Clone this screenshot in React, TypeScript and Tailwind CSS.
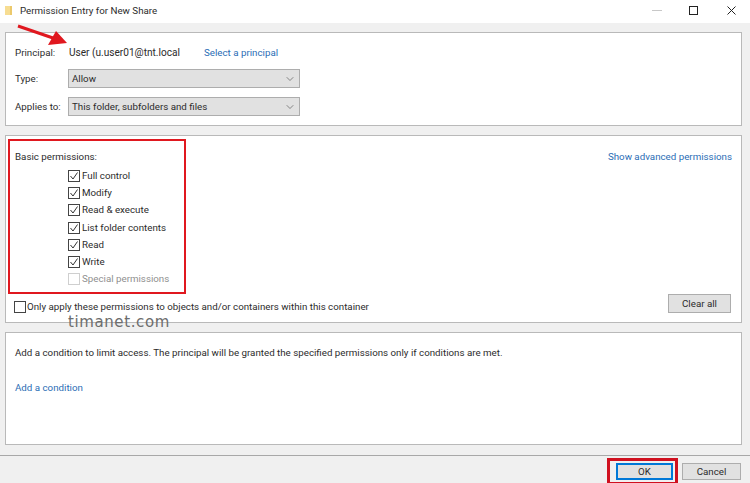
import { ChevronDown } from 'lucide-react'

const permissions = ['Full control', 'Modify', 'Read & execute', 'List folder contents', 'Read', 'Write']

function Check({ checked = false, disabled = false }: { checked?: boolean; disabled?: boolean }) {
  return (
    <span
      className={`flex h-[12px] w-[12px] shrink-0 items-center justify-center border bg-white ${
        disabled ? 'border-[#cfcfcf]' : 'border-[#444444]'
      }`}
    >
      {checked && (
        <svg width="10" height="10" viewBox="0 0 10 10" fill="none" stroke="#333333" strokeWidth="1">
          <path d="M1.5 5 L4 8 L8.5 1.5" />
        </svg>
      )}
    </span>
  )
}

function Select({ value }: { value: string }) {
  return (
    <div className="flex h-[19px] w-[232px] items-center justify-between border border-[#adadad] bg-[#e1e1e1] px-[3px]">
      <span className="pt-px">{value}</span>
      <ChevronDown size={12} strokeWidth={1.2} className="text-[#444444]" />
    </div>
  )
}

export default function App() {
  return (
    <div
      className="relative flex h-[483px] w-[750px] flex-col overflow-hidden bg-[#f0f0f0] text-[9.75px] leading-[14px] text-[#2b2b2b]"
      style={{ fontFamily: 'Roboto, sans-serif' }}
    >
      {/* Title bar */}
      <div className="flex h-[23px] shrink-0 items-center bg-white pb-[2px] pl-[5px]">
        <svg width="7" height="9" viewBox="0 0 7 9" className="mr-[8px]">
          <path d="M0 0 H7 V9 H0 Z" fill="#f7dd92" />
          <path d="M5 0 H7 V9 H5 Z" fill="#ecc96c" />
        </svg>
        <span>Permission Entry for New Share</span>
        <div className="ml-auto flex items-center">
          <div className="mr-[27px] h-px w-[10px] bg-[#c8c8c8]" />
          <div className="mr-[29px] h-[9px] w-[9px] border border-[#222222]" />
          <svg width="9" height="9" viewBox="0 0 9 9" stroke="#222222" strokeWidth="1" className="mr-[14px]">
            <path d="M0.5 0.5 L8.5 8.5 M8.5 0.5 L0.5 8.5" />
          </svg>
        </div>
      </div>

      <div className="flex flex-col gap-[9px] pl-[5px] pr-[8px] pt-[9px]">
        {/* Principal */}
        <div className="flex h-[94px] shrink-0 flex-col border border-[#b9b9b9] bg-white pl-[9px] pt-[11px]">
          <div className="flex h-[16px] items-center pt-px">
            <span className="w-[54px]">Principal:</span>
            <span className="w-[135px] text-[10.1px]">User (u.user01@tnt.local</span>
            <span className="text-[#2a6db5]">Select a principal</span>
          </div>
          <div className="mt-[9px] flex items-center">
            <span className="w-[53px] pt-px">Type:</span>
            <Select value="Allow" />
          </div>
          <div className="mt-[9px] flex items-center">
            <span className="w-[53px] pt-px">Applies to:</span>
            <Select value="This folder, subfolders and files" />
          </div>
        </div>

        {/* Basic permissions */}
        <div className="flex h-[188px] shrink-0 flex-col border border-[#b9b9b9] bg-white pl-[9px] pr-[9px] pt-[14px]">
          <div className="flex h-[14px] items-center justify-between">
            <span>Basic permissions:</span>
            <span className="text-[#2a6db5]">Show advanced permissions</span>
          </div>
          <div className="mt-[3px] flex flex-col pl-[53px]">
            {permissions.map((p) => (
              <div key={p} className="flex h-[17.3px] items-center gap-[2px]">
                <Check checked />
                <span>{p}</span>
              </div>
            ))}
            <div className="flex h-[17.3px] items-center gap-[2px] text-[#8f8f8f]">
              <Check disabled />
              <span>Special permissions</span>
            </div>
          </div>
          <div className="mt-[6px] flex items-start justify-between">
            <div className="-ml-[1px] mt-[6px] flex items-center gap-[1px]">
              <Check />
              <span>Only apply these permissions to objects and/or containers within this container</span>
            </div>
            <div className="mr-px flex h-[19px] w-[63px] items-center justify-center border border-[#adadad] bg-[#e1e1e1]">
              Clear all
            </div>
          </div>
        </div>

        {/* Condition */}
        <div className="flex h-[113px] shrink-0 flex-col border border-[#b9b9b9] bg-white pl-[9px] pt-[13px]">
          <span>
            Add a condition to limit access. The principal will be granted the specified permissions only if conditions are met.
          </span>
          <span className="mt-[21px] text-[#2a6db5]">Add a condition</span>
        </div>
      </div>

      {/* Footer */}
      <div className="mt-[10px] flex h-[28px] shrink-0 items-start justify-end gap-[9px] border-t border-[#a8a8a8] pr-[9px] pt-[7px]">
        <div className="flex h-[17px] w-[57px] items-center justify-center border-2 border-[#0078d7] bg-[#e1e1e1]">OK</div>
        <div className="flex h-[17px] w-[59px] items-center justify-center border border-[#adadad] bg-[#e1e1e1]">Cancel</div>
      </div>

      {/* Annotations */}
      <svg className="absolute left-[15px] top-[22px]" width="60" height="28" viewBox="0 0 60 28">
        <path d="M3 4 L38 16" stroke="#e0181f" strokeWidth="3" />
        <path d="M52 21 L33 23 L41 9 Z" fill="#e0181f" />
      </svg>
      <div className="absolute left-[8px] top-[139px] h-[155px] w-[178px] border-2 border-[#e0181f]" />
      <div className="absolute left-[607px] top-[458px] h-[27px] w-[71px] border-[3px] border-[#d0101f]" />
      <span
        className="absolute left-[68px] top-[313px] text-[15px] leading-[18px] tracking-[0.6px] text-[#6d6d6d]"
        style={{ fontFamily: '"DejaVu Sans", sans-serif' }}
      >
        timanet.com
      </span>
    </div>
  )
}
